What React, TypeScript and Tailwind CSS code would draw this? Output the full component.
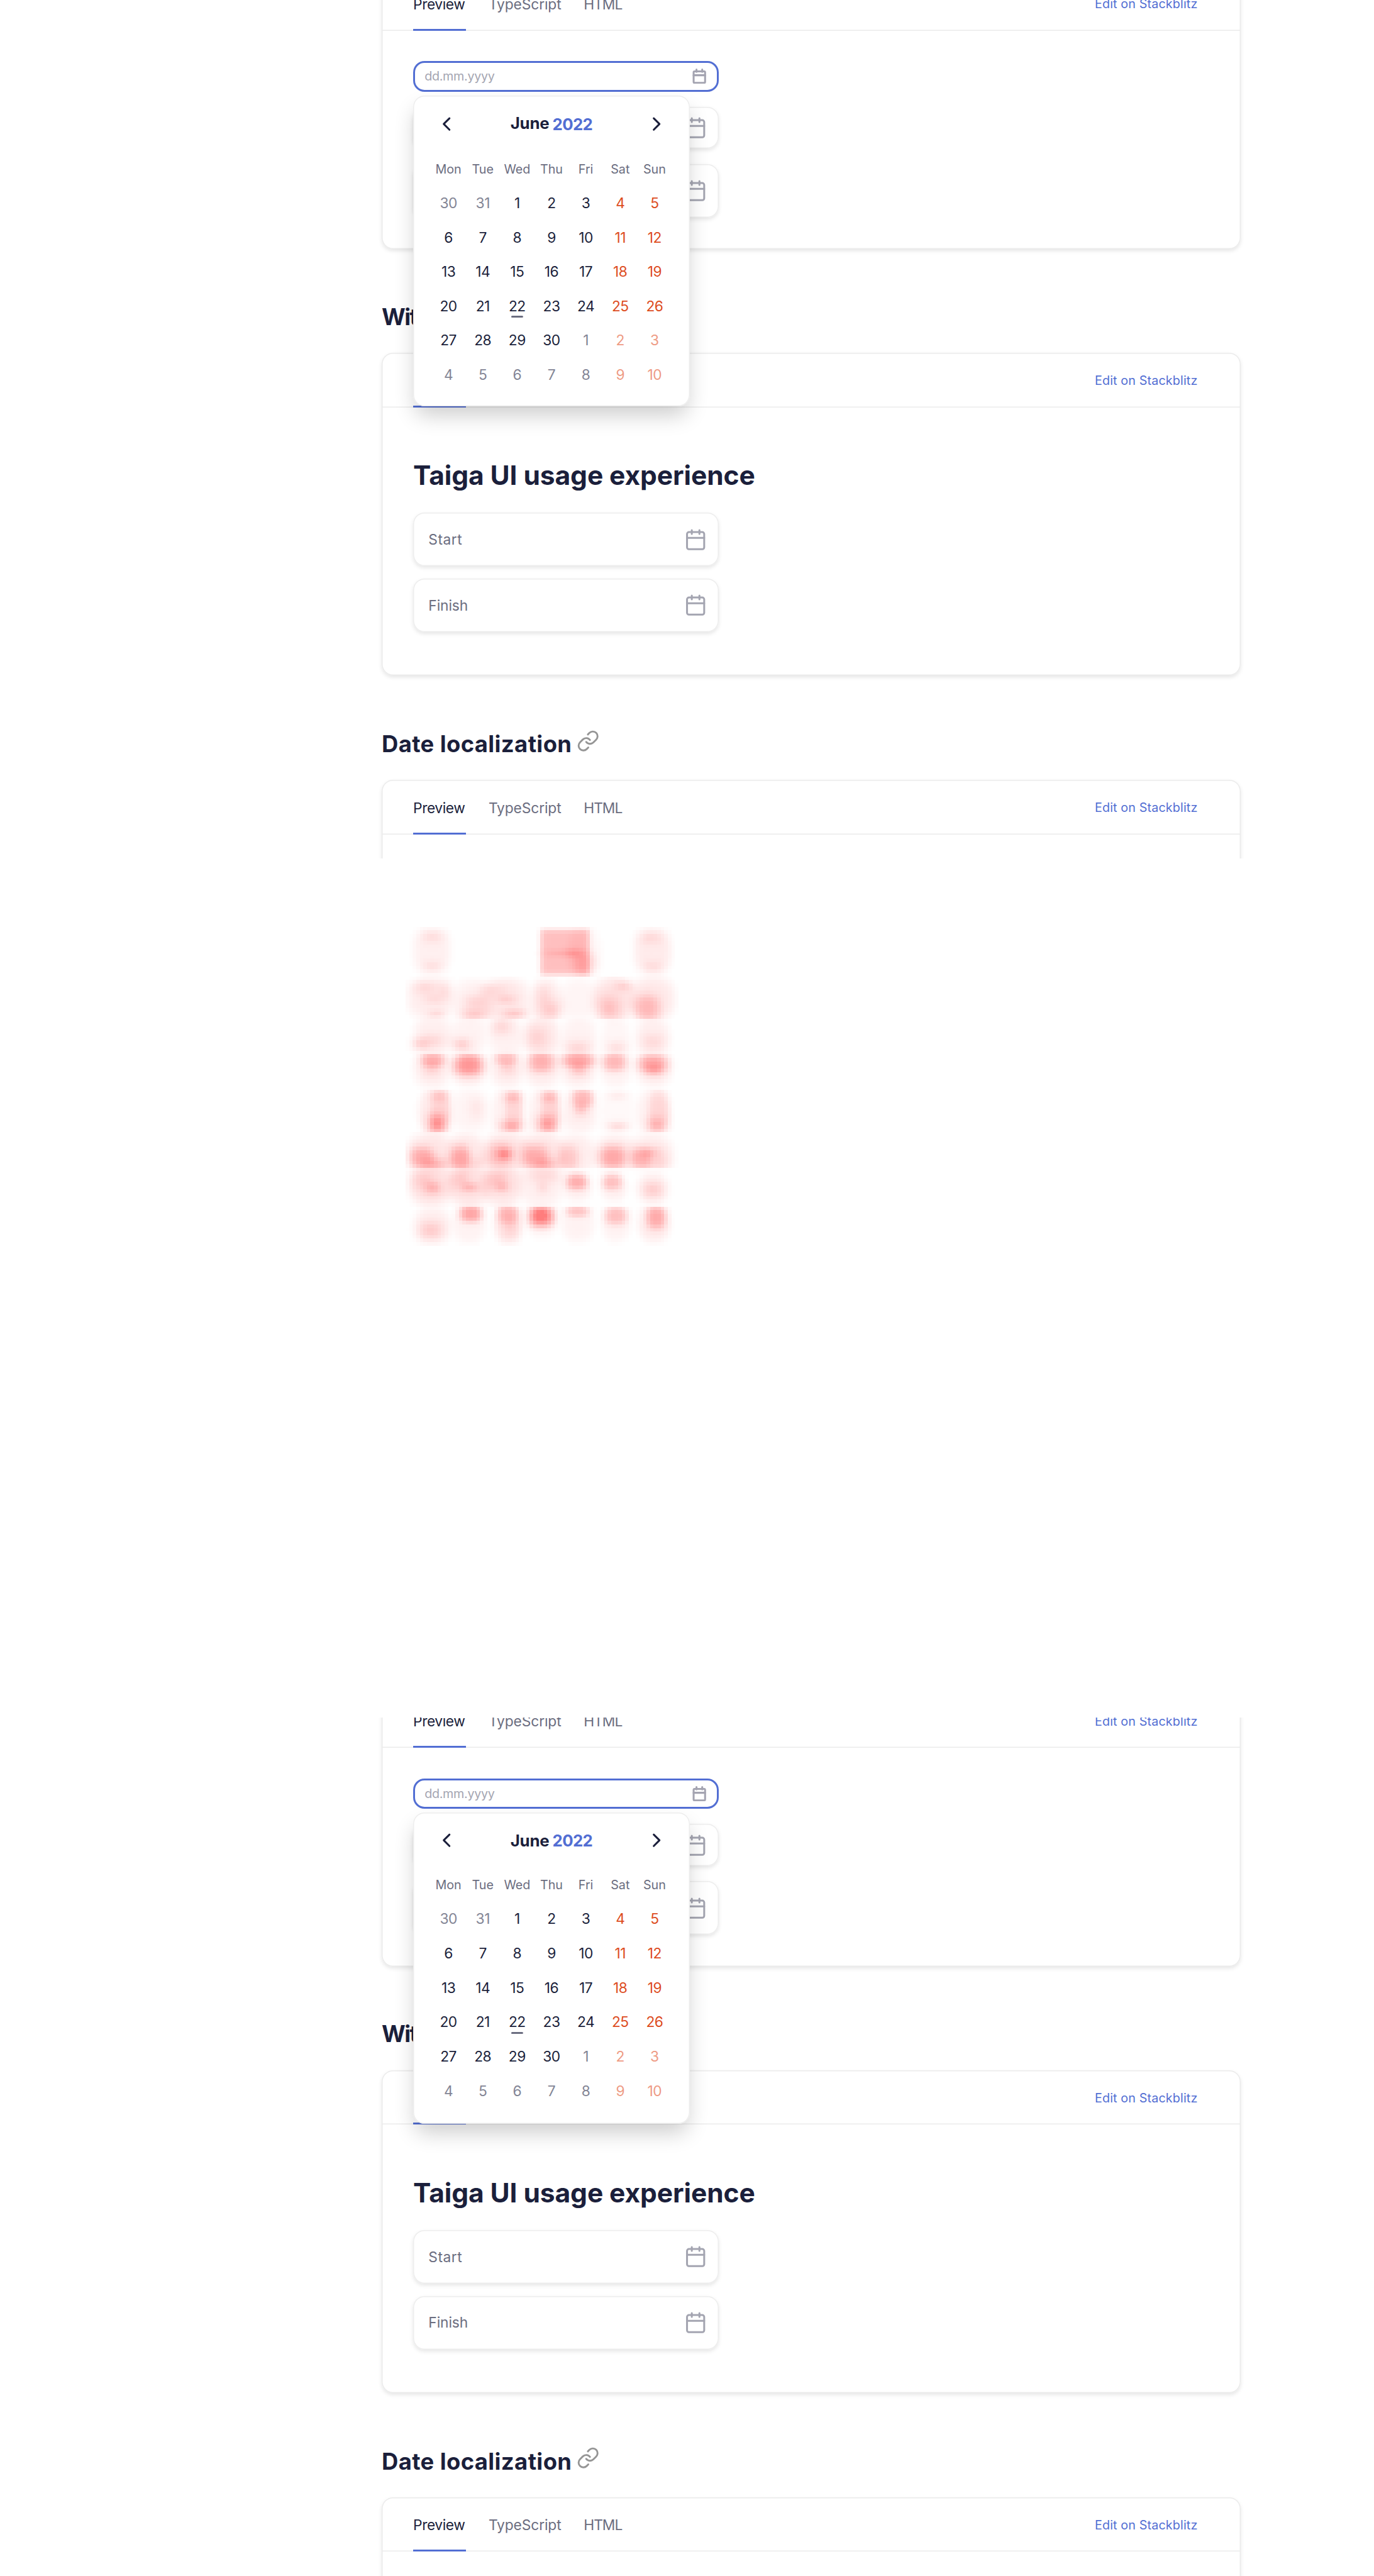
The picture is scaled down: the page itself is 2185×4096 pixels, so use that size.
import React from "react";

type Blob = [cx: number, cy: number, rx: number, ry: number, a: number, p?: number];

/* Heat spots: centre, radii, strength and edge hardness. */
const BLOBS: Blob[] = [
  [210, 195, 98, 102, 0.06, 5], [212, 130, 60, 28, 0.07], [212, 258, 50, 25, 0.06],
  [893, 197, 128, 100, 0.25, 12], [990, 197, 88, 108, 0.04, 5], [870, 202, 90, 16, 0.06], [940, 202, 45, 20, 0.08], [1000, 245, 60, 50, 0.1, 3],
  [1345, 195, 98, 102, 0.08, 5], [1335, 135, 60, 28, 0.07], [1345, 260, 50, 25, 0.06],

  [200, 400, 118, 92, 0.07, 5], [175, 350, 60, 30, 0.08], [275, 365, 38, 45, 0.06], [215, 400, 50, 24, 0.06], [235, 465, 45, 18, 0.08],
  [420, 405, 105, 92, 0.05, 5], [435, 415, 60, 34, 0.11], [430, 468, 70, 26, 0.15],
  [590, 402, 125, 95, 0.08, 5], [530, 360, 80, 28, 0.06], [590, 402, 55, 22, 0.1], [635, 465, 65, 22, 0.14],
  [800, 405, 82, 92, 0.06, 5], [785, 385, 42, 50, 0.08], [818, 450, 58, 44, 0.13],
  [965, 400, 95, 90, 0.04, 5],
  [1145, 400, 105, 100, 0.1, 5], [1195, 345, 45, 22, 0.09], [1120, 440, 60, 55, 0.15],
  [1345, 400, 115, 98, 0.09, 5], [1315, 440, 68, 60, 0.19, 3],

  [215, 555, 98, 90, 0.06, 5], [150, 595, 45, 28, 0.11], [215, 580, 60, 32, 0.08],
  [400, 560, 92, 88, 0.05, 5], [362, 597, 48, 28, 0.13],
  [590, 565, 88, 88, 0.05, 5], [568, 520, 55, 38, 0.1],
  [775, 560, 92, 88, 0.07, 5], [752, 568, 62, 52, 0.1],
  [965, 565, 90, 90, 0.05, 5], [960, 612, 70, 32, 0.1],
  [1155, 565, 75, 85, 0.035, 5], [1160, 610, 55, 28, 0.08],
  [1345, 565, 88, 88, 0.06, 5], [1345, 585, 60, 38, 0.08],

  [215, 665, 62, 32, 0.23, 3], [210, 702, 50, 36, 0.1], [210, 700, 95, 88, 0.06, 5],
  [398, 685, 76, 48, 0.34, 3], [400, 705, 90, 75, 0.07, 5],
  [590, 658, 58, 32, 0.17, 3], [600, 698, 45, 36, 0.1], [595, 700, 88, 85, 0.06, 5],
  [772, 672, 66, 46, 0.24, 3], [775, 700, 92, 82, 0.07, 5],
  [962, 666, 86, 34, 0.28, 3], [965, 708, 46, 30, 0.14], [960, 700, 95, 82, 0.06, 5],
  [1148, 673, 62, 40, 0.23, 3], [1155, 700, 80, 82, 0.05, 5],
  [1345, 680, 76, 40, 0.27, 3], [1352, 710, 48, 30, 0.12], [1350, 700, 95, 82, 0.06, 5],

  [225, 888, 88, 98, 0.08, 5], [255, 880, 50, 96, 0.08, 4], [248, 820, 50, 26, 0.1], [235, 940, 46, 44, 0.3],
  [405, 885, 95, 98, 0.04, 5], [440, 875, 45, 50, 0.05],
  [600, 888, 82, 98, 0.06, 5], [632, 885, 48, 96, 0.1, 4], [625, 825, 48, 24, 0.13], [615, 950, 60, 28, 0.2],
  [790, 888, 82, 98, 0.06, 5], [818, 885, 50, 96, 0.11, 4], [812, 825, 45, 24, 0.13], [800, 942, 52, 38, 0.24],
  [970, 888, 90, 98, 0.06, 5], [985, 830, 55, 42, 0.22, 3], [975, 880, 36, 30, 0.12],
  [1160, 885, 88, 96, 0.025, 5], [1165, 820, 55, 18, 0.05], [1165, 950, 55, 20, 0.11],
  [1350, 888, 90, 98, 0.06, 5], [1375, 885, 54, 96, 0.1, 4], [1363, 945, 52, 34, 0.16],

  [200, 1072, 120, 92, 0.1, 5], [160, 1085, 64, 46, 0.22, 3], [230, 1115, 70, 30, 0.16],
  [385, 1072, 100, 92, 0.09, 5], [358, 1088, 50, 54, 0.25, 3], [440, 1112, 55, 32, 0.06],
  [590, 1072, 120, 95, 0.1, 5], [560, 1075, 70, 56, 0.14, 3], [582, 1070, 40, 26, 0.23],
  [775, 1072, 115, 92, 0.1, 5], [745, 1082, 68, 50, 0.21, 3], [800, 1115, 62, 28, 0.14],
  [950, 1075, 100, 92, 0.07, 5], [915, 1088, 52, 56, 0.14, 3],
  [1150, 1075, 105, 90, 0.08, 5], [1140, 1084, 70, 50, 0.26, 3],
  [1335, 1075, 115, 90, 0.08, 5], [1285, 1090, 52, 46, 0.21, 3], [1335, 1062, 55, 24, 0.13], [1370, 1105, 55, 34, 0.09],

  [205, 1205, 112, 94, 0.11, 5], [165, 1185, 60, 40, 0.09], [215, 1218, 44, 28, 0.16],
  [400, 1205, 108, 94, 0.11, 5], [355, 1178, 50, 38, 0.1], [405, 1215, 48, 22, 0.15],
  [570, 1205, 100, 92, 0.1, 5], [548, 1182, 56, 40, 0.13], [570, 1215, 38, 22, 0.11],
  [770, 1205, 120, 94, 0.06, 5], [790, 1165, 85, 32, 0.08], [780, 1215, 32, 28, 0.07],
  [955, 1190, 55, 36, 0.26, 3], [960, 1220, 70, 56, 0.06, 4],
  [1135, 1190, 52, 36, 0.19, 3], [1145, 1220, 68, 56, 0.06, 4],
  [1345, 1225, 56, 38, 0.14], [1345, 1220, 78, 68, 0.05, 5],

  [212, 1378, 92, 84, 0.06, 5], [205, 1400, 64, 40, 0.14],
  [410, 1328, 58, 38, 0.3, 3], [402, 1375, 86, 84, 0.05, 5],
  [600, 1330, 55, 44, 0.2, 3], [602, 1375, 74, 84, 0.09, 5], [612, 1390, 42, 48, 0.08],
  [772, 1340, 66, 46, 0.4, 3], [770, 1335, 35, 25, 0.12], [775, 1360, 75, 72, 0.05, 4],
  [958, 1318, 60, 26, 0.18, 3], [960, 1370, 85, 84, 0.05, 5],
  [1155, 1338, 58, 40, 0.2, 3], [1155, 1370, 75, 82, 0.05, 5],
  [1362, 1345, 50, 50, 0.25, 3], [1352, 1370, 85, 84, 0.08, 5],
];

const BANDS = [88, 305, 487, 640, 798, 982, 1136, 1295, 1465];

const COLS = 77;
const ROWS = 93;
const STEP_X = 18.2;
const STEP_Y = 15.33;

const bandOf = (y: number) => BANDS.findIndex((edge) => y < edge);

function heatAt(x: number, y: number) {
  const band = bandOf(y);
  let sum = 0;
  for (const [cx, cy, rx, ry, a, p = 2] of BLOBS) {
    const soft = bandOf(cy) === band ? 1 : 0.15;
    const dx = Math.abs(x - cx) / rx;
    const dy = Math.abs(y - cy) / ry;
    const d = p > 8 ? Math.pow(dx, p) + Math.pow(dy, p) : Math.pow(Math.pow(dx, 2.3) + Math.pow(dy, 2.3), p / 2.3);
    if (d < 6) sum += soft * a * Math.exp(-d);
  }
  return Math.min(sum, 0.51);
}

function HeatMap() {
  const cells: React.ReactNode[] = [];
  for (let r = 0; r < ROWS; r++) {
    for (let c = 0; c < COLS; c++) {
      const v = heatAt(75 + (c + 0.5) * STEP_X, 72.4 + (r + 0.5) * STEP_Y);
      if (v > 0.004) {
        cells.push(<rect key={r * COLS + c} x={c} y={r} width={1} height={1} fillOpacity={v.toFixed(3)} />);
      }
    }
  }
  return (
    <svg className="block h-[524px] w-[433.9px]" viewBox={`0 0 ${COLS} ${ROWS}`} preserveAspectRatio="none" fill="#ff0000" shapeRendering="crispEdges">
      {cells}
    </svg>
  );
}

function CalendarIcon() {
  return (
    <svg className="h-[36.4px] w-[36.4px] text-[#a4a5b1]" viewBox="0 0 24 24" fill="none" stroke="currentColor" strokeWidth={2} strokeLinecap="round">
      <rect x="3" y="4" width="18" height="18" rx="2" />
      <path d="M8 2v4M16 2v4M3 10h18" />
    </svg>
  );
}

function SmallCalendarIcon() {
  return (
    <svg className="h-[24.3px] w-[24.3px] text-[#a4a4b1]" viewBox="0 0 16 16" fill="none" stroke="currentColor" strokeWidth={2} strokeLinecap="round">
      <rect x="2" y="3" width="12" height="12" rx="1" />
      <path d="M5 1v2.5M11 1v2.5M2 7h12" />
    </svg>
  );
}

function LinkIcon() {
  return (
    <svg className="ml-2 h-[36.4px] w-[36.4px] text-[#959595]" viewBox="0 0 24 24" fill="none" stroke="currentColor" strokeWidth={1.9} strokeLinecap="round" strokeLinejoin="round">
      <path d="M10 13a5 5 0 0 0 7.54.54l3-3a5 5 0 0 0-7.07-7.07l-1.72 1.71" />
      <path d="M14 11a5 5 0 0 0-7.54-.54l-3 3a5 5 0 0 0 7.07 7.07l1.71-1.71" />
    </svg>
  );
}

function Chevron({ d }: { d: string }) {
  return (
    <svg className="h-[36.4px] w-[36.4px]" viewBox="0 0 24 24" fill="none" stroke="currentColor" strokeWidth={2} strokeLinecap="round" strokeLinejoin="round">
      <path d={d} />
    </svg>
  );
}

const WEEKDAYS = ["Mon", "Tue", "Wed", "Thu", "Fri", "Sat", "Sun"];
const DAYS = [30, 31, ...Array.from({ length: 30 }, (_, i) => i + 1), ...Array.from({ length: 10 }, (_, i) => i + 1)];

function dayColor(i: number) {
  const outside = i < 2 || i > 31;
  const weekend = i % 7 > 4;
  if (weekend) return outside ? "text-[#ee9b84]" : "text-[#dd4c1e]";
  return outside ? "text-[#838595]" : "text-[#1b1f3b]";
}

function Calendar({ raised }: { raised: boolean }) {
  return (
    <div
      className={`absolute top-[54.6px] left-0 h-[494.5px] w-[440px] rounded-[18px] bg-white tracking-normal text-[#1b1f3b] shadow-[inset_0_0_0_1.5px_#ededed,0_18px_34px_-4px_rgba(0,0,0,0.2)] ${raised ? "pt-[25.4px]" : "pt-[27.6px]"}`}
    >
      <div className="flex h-[36.4px] items-center justify-between px-[34.9px]">
        <Chevron d="m15 18-6-6 6-6" />
        <div className="flex gap-[5px] text-[25.8px] leading-[34px] font-bold">
          <span className={raised ? "relative top-[0.7px] tracking-[-0.2px]" : "relative top-[-1.5px] tracking-[-0.2px]"}>June</span>
          <span className="relative top-[0.8px] tracking-[-0.6px] text-[#526ed3]">2022</span>
        </div>
        <Chevron d="m9 18 6-6-6-6" />
      </div>
      <div className="mt-[35.2px] grid grid-cols-7 px-[28.8px] text-center text-[19.7px] leading-[36px] text-[#6b6d80]">
        {WEEKDAYS.map((d) => (
          <span key={d} className="whitespace-nowrap">{d}</span>
        ))}
      </div>
      <div className="mt-[9.2px] grid grid-cols-7 px-[28.8px] text-center text-[22.76px] leading-[54.62px] tracking-[-0.5px]">
        {DAYS.map((d, i) => (
          <span key={i} className={`relative ${dayColor(i)}`}>
            {d}
            {i === 23 && <span className="absolute bottom-[9px] left-1/2 h-[3px] w-[18.2px] -translate-x-1/2 rounded-full bg-[#6b6d80]" />}
          </span>
        ))}
      </div>
    </div>
  );
}

function Field({ label, className }: { label?: string; className: string }) {
  return (
    <div
      className={`flex w-[485.5px] items-center justify-between rounded-[18px] bg-white pr-[18.2px] pl-[24.3px] text-[22.76px] leading-8 text-[#6b6d80] shadow-[inset_0_0_0_1.5px_#ededed,0_3px_6px_rgba(0,0,0,0.1)] ${className}`}
    >
      <span>{label}</span>
      <CalendarIcon />
    </div>
  );
}

function Card({ className, children }: { className: string; children?: React.ReactNode }) {
  return (
    <section className={`w-[1365.6px] shrink-0 rounded-[18px] bg-white shadow-[inset_0_0_0_1.5px_#ebebeb,0_3px_6px_rgba(0,0,0,0.1)] ${className}`}>
      <div className="flex h-[86.5px] justify-between pr-[68.2px] pl-[50px] shadow-[inset_0_-1.5px_0_#ebebeb]">
        <div className="flex gap-[36.4px] pt-[1.5px] text-[22.76px] leading-[85px] text-[#6b6d80]">
          <span className="h-[85px] w-[83.5px] tracking-[-0.4px] whitespace-nowrap text-[#1b1f3b] shadow-[inset_0_-3px_0_#526ed3]">Preview</span>
          <span className="w-[115px] tracking-[-0.1px] whitespace-nowrap">TypeScript</span>
          <span className="tracking-[-1px]">HTML</span>
        </div>
        <a className="pt-[3.2px] text-[19.72px] leading-[83.7px] tracking-[0.14px] text-[#526ed3]">Edit on Stackblitz</a>
      </div>
      {children}
    </section>
  );
}

function Frame({ raised = false }: { raised?: boolean }) {
  return (
    <div className="flex h-[1365.33px] flex-col overflow-hidden pl-[607px] text-[#1b1f3b]">
      <Card className="relative z-10 -mt-[38px] h-[434px]">
        <div className="flex flex-col gap-[24.3px] pt-[48.5px] pl-[50px]">
          <div className="relative z-10 flex h-[48.5px] w-[485.5px] items-center justify-between rounded-[18px] bg-white pr-[18.2px] pl-[18.2px] text-[19.72px] leading-7 tracking-[-0.3px] text-[#a4a5b1] shadow-[inset_0_0_0_3px_#526ed3]">
            <span>dd.mm.yyyy</span>
            <SmallCalendarIcon />
            <Calendar raised={raised} />
          </div>
          <Field className="h-[66.7px]" />
          <Field className="h-[85px]" />
        </div>
      </Card>
      <h2 className="h-[165.3px] shrink-0 pt-[87.8px] text-[36.4px] leading-10 font-bold tracking-[-1.6px]">With</h2>
      <Card className="h-[512.8px]">
        <div className="pt-[82.1px] pl-[50px]">
          <h3 className="text-[42.5px] leading-[52px] font-bold tracking-[-0.08px]">Taiga UI usage experience</h3>
          <Field label="Start" className="mt-[33.5px] h-[85px] tracking-[0.5px]" />
          <Field label="Finish" className="mt-[19.7px] h-[85px] tracking-[-0.1px]" />
        </div>
      </Card>
      <h2 className="flex h-[166px] shrink-0 items-baseline pt-[85.5px] text-[36.4px] leading-10 font-bold tracking-[0.4px]">
        Date localization
        <LinkIcon />
      </h2>
      <Card className="h-[434px]" />
    </div>
  );
}

export default function App() {
  return (
    <main className="h-[4096px] w-[2185px] overflow-hidden bg-white font-['Inter',sans-serif]">
      <Frame />
      <div className="h-[1365.33px] pt-[102.5px] pl-[645.4px]">
        <HeatMap />
      </div>
      <Frame raised />
    </main>
  );
}
